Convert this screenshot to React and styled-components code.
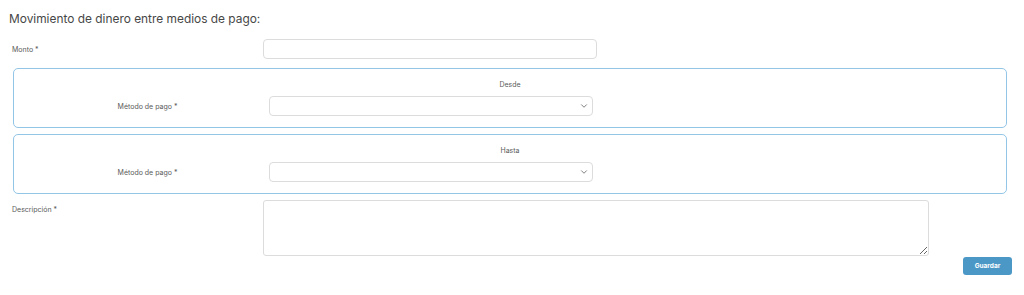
import React from 'react';
import styled, { createGlobalStyle } from 'styled-components';
import { FiChevronDown } from 'react-icons/fi';

const GlobalStyle = createGlobalStyle`
    body {
        margin: 0;
        background: #fff;
        font-family: "Inter", "Liberation Sans", sans-serif;
        color: #555;
    }
`;

const MetodoPago = () => (
    <MethodRow>
        <MethodLabel>Método de pago *</MethodLabel>
        <SelectWrap>
            <Select defaultValue="">
                <option value=""></option>
            </Select>
            <Chevron><FiChevronDown size={10} /></Chevron>
        </SelectWrap>
    </MethodRow>
);

export default function App() {
    return (
        <>
            <GlobalStyle />
            <Page>
                <Title>Movimiento de dinero entre medios de pago:</Title>
                <FieldRow>
                    <Label>Monto *</Label>
                    <Input type="text" />
                </FieldRow>
                <Box>
                    <BoxTitle>Desde</BoxTitle>
                    <MetodoPago />
                </Box>
                <Box>
                    <BoxTitle>Hasta</BoxTitle>
                    <MetodoPago />
                </Box>
                <FieldRow $top>
                    <Label $top>Descripción *</Label>
                    <TextArea />
                </FieldRow>
                <Actions>
                    <Button type="button">Guardar</Button>
                </Actions>
            </Page>
        </>
    );
}

const Page = styled.div`
    width: 1024px;
    height: 295px;
    box-sizing: border-box;
    padding: 12px 17px 0 0;
`;

const Title = styled.h2`
    margin: 0 0 13px 9px;
    font-size: 11.9px;
    line-height: 14px;
    font-weight: 400;
    color: #474747;
`;

const FieldRow = styled.div`
    display: grid;
    grid-template-columns: 251px ${(p) => (p.$top ? '666px' : '334px')};
    align-items: ${(p) => (p.$top ? 'start' : 'center')};
    padding-left: 12px;
    margin-bottom: ${(p) => (p.$top ? '1px' : '9px')};
`;

const Label = styled.label`
    font-size: 7px;
    color: #5a5a5a;
    padding-top: ${(p) => (p.$top ? '5px' : '0')};
`;

const Input = styled.input`
    height: 20px;
    box-sizing: border-box;
    border: 1px solid #dcdcdc;
    border-radius: 4px;
    background: #fff;
    outline: none;
`;

const TextArea = styled.textarea`
    height: 56px;
    box-sizing: border-box;
    border: 1px solid #dcdcdc;
    border-radius: 3px;
    background: #fff;
    outline: none;
    margin: 0;
`;

const Box = styled.div`
    margin-left: 13px;
    height: 60px;
    box-sizing: border-box;
    border: 1px solid #92c5e6;
    border-radius: 5px;
    padding: 11px 12px 0;
    margin-bottom: 6px;
`;

const BoxTitle = styled.div`
    text-align: center;
    font-size: 7px;
    line-height: 10px;
    color: #5a5a5a;
    margin-bottom: 6px;
`;

const MethodRow = styled.div`
    display: grid;
    grid-template-columns: 243px 324px;
    align-items: center;
`;

const MethodLabel = styled.div`
    text-align: center;
    font-size: 7px;
    color: #5a5a5a;
`;

const SelectWrap = styled.div`
    position: relative;
    height: 20px;
`;

const Select = styled.select`
    appearance: none;
    display: block;
    width: 100%;
    height: 20px;
    box-sizing: border-box;
    border: 1px solid #dcdcdc;
    border-radius: 4px;
    background: #fff;
    outline: none;
`;

const Chevron = styled.span`
    position: absolute;
    right: 4px;
    top: 5px;
    display: flex;
    color: #666;
    pointer-events: none;
`;

const Actions = styled.div`
    display: flex;
    justify-content: flex-end;
    margin-right: -5px;
`;

const Button = styled.button`
    width: 49px;
    height: 18px;
    border: none;
    border-radius: 3px;
    background: #4b98c7;
    color: #fff;
    font-family: inherit;
    font-size: 6.5px;
    font-weight: 700;
    padding: 0;
`;
